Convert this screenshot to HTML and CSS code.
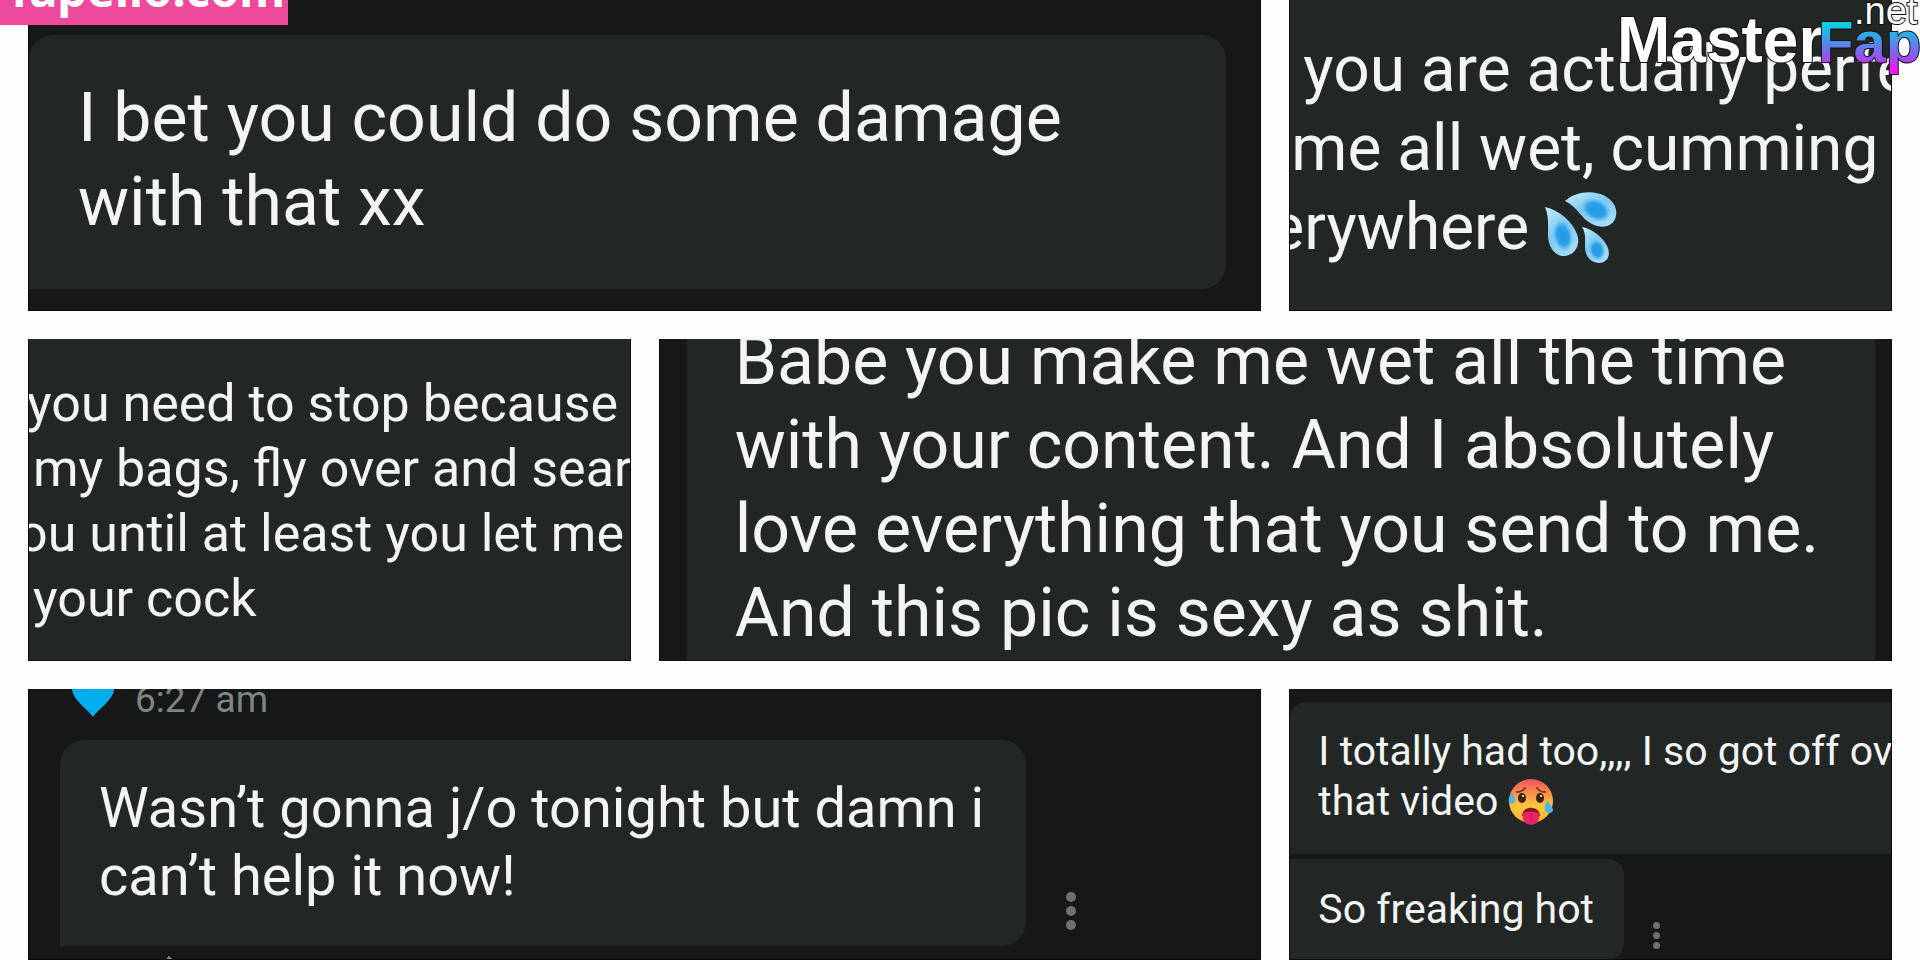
FILE: index.html
```html
<!DOCTYPE html>
<html lang="en">
<head>
<meta charset="utf-8">
<title>Messages</title>
<link rel="stylesheet" href="styles.css">
</head>
<body>
<div class="tag">fapello.com</div>
<svg class="logo" viewBox="0 0 304 80" role="img" aria-label="MasterFap.net">
  <defs>
    <linearGradient id="fap" gradientUnits="userSpaceOnUse" x1="0" y1="18" x2="0" y2="76">
      <stop offset="0" stop-color="#00e5e0"/>
      <stop offset="0.3" stop-color="#2fa8e8"/>
      <stop offset="0.7" stop-color="#a04cf0"/>
      <stop offset="0.9" stop-color="#ff10ff"/>
    </linearGradient>
  </defs>
  <text class="logo-main" x="1" y="62">Master</text>
  <text class="logo-fap" x="202" y="62">Fap</text>
  <text class="logo-net" x="238" y="24">.net</text>
</svg>
<main class="collage">
  <section class="panel wide first">
    <p class="bubble large open-left">I bet you could do some damage<br>with that xx</p>
  </section>

  <section class="panel plain second">
    <p class="lines medium">
      <span class="line in-a">you are actually perfe</span>
      <span class="line in-b">me all wet, cumming</span>
      <span class="line out-a">erywhere <svg class="drops" viewBox="0 0 72 72" role="img" aria-label="sweat drops">
        <defs>
          <linearGradient id="drop" x1="0" y1="0" x2="0.7" y2="1">
            <stop offset="0" stop-color="#c9effd"/><stop offset="0.5" stop-color="#7cc9f3"/><stop offset="1" stop-color="#a5dcf7"/>
          </linearGradient>
          <radialGradient id="core">
            <stop offset="0" stop-color="#1e97e4"/><stop offset="0.6" stop-color="#2fa2e8"/><stop offset="1" stop-color="#5ab8ee" stop-opacity="0"/>
          </radialGradient>
        </defs>
        <path fill="url(#drop)" d="M20 9C31-1 48-2 60 4c11 6 14 17 9 25-5 7-14 7-22 3C36 27 33 15 20 9Z"/>
        <ellipse fill="url(#core)" cx="51" cy="18" rx="16" ry="11" transform="rotate(25 51 18)"/>
        <path fill="url(#drop)" d="M0 15c14 3 27 14 32 27 4 11-2 21-12 22C10 65 3 55 3 43 3 33 4 25 0 15Z"/>
        <ellipse fill="url(#core)" cx="18" cy="44" rx="10" ry="16" transform="rotate(-12 18 44)"/>
        <path fill="url(#drop)" d="M37 35c11 2 22 11 26 21 3 9-2 15-9 15-8 0-14-7-14-16 0-7 1-14-3-20Z"/>
        <ellipse fill="url(#core)" cx="52" cy="58" rx="8" ry="11" transform="rotate(-12 52 58)"/>
      </svg></span>
    </p>
  </section>

  <section class="panel plain third">
    <p class="lines small">
      <span class="line out-b">you need to stop because</span>
      <span class="line in-c">my bags, fly over and sear</span>
      <span class="line out-c">ou until at least you let me</span>
      <span class="line in-c">your cock</span>
    </p>
  </section>

  <section class="panel wide fourth">
    <p class="bubble large">Babe you make me wet all the time<br>with your content. And I absolutely<br>love everything that you send to me.<br>And this pic is sexy as shit.</p>
  </section>

  <section class="panel wide fifth">
    <div class="meta">
      <svg class="heart" viewBox="0 0 42 40" aria-hidden="true"><path fill="#03aeef" d="M21 40C15 31 0 23 0 11 0-2 16-4 21 6c5-10 21-8 21 5 0 12-15 20-21 29Z"/></svg>
      <time>6:27 am</time>
    </div>
    <div class="row">
      <p class="bubble base">Wasn’t gonna j/o tonight but damn i<br>can’t help it now!</p>
      <button class="more" aria-label="More"><i></i><i></i><i></i></button>
    </div>
    <svg class="tick" viewBox="0 0 12 8" aria-hidden="true"><path d="M1 8 5 2l6 6" fill="none" stroke="#7d8585" stroke-width="3"/></svg>
  </section>

  <section class="panel sixth">
    <p class="bubble tiny bleed">I totally had too,,,, I so got off over<br>that video <svg class="face" viewBox="0 0 46 46" role="img" aria-label="hot face">
      <defs>
        <linearGradient id="skin" x1="0" y1="0" x2="0" y2="1">
          <stop offset="0" stop-color="#f0525a"/><stop offset="0.3" stop-color="#fa8a4c"/><stop offset="0.6" stop-color="#fdc63a"/><stop offset="1" stop-color="#fbb52c"/>
        </linearGradient>
      </defs>
      <circle cx="23" cy="22" r="22" fill="url(#skin)"/>
      <path d="M9 13q5 0 8-4M29 9q3 4 8 4" fill="none" stroke="#7a3a1c" stroke-width="2" stroke-linecap="round"/>
      <ellipse cx="14" cy="19" rx="4" ry="5" fill="#3b2114"/><ellipse cx="32" cy="19" rx="4" ry="5" fill="#3b2114"/>
      <circle cx="15" cy="17" r="1" fill="#fff"/><circle cx="33" cy="17" r="1" fill="#fff"/>
      <path d="M14 37c0-11 18-11 18 0Z" fill="#7b1c22"/>
      <path d="M15 34q8-3 16 0v5c0 9-16 9-16 0Z" fill="#e8246c"/>
      <path d="M23 34v7" stroke="#b8124f" stroke-width="1"/>
      <path d="M4 14c4 5 4 10 0 11-5-1-4-6 0-11ZM39 22c7 6 8 12 2 12-6-1-5-6-2-12Z" fill="#4fb6e6"/>
    </svg></p>
    <div class="row">
      <p class="bubble tiny short">So freaking hot</p>
      <button class="more mini" aria-label="More"><i></i><i></i><i></i></button>
    </div>
  </section>
</main>
</body>
</html>
```
FILE: styles.css
```css
* { box-sizing: border-box; }
body {
  margin: 0;
  height: 100vh;
  overflow: hidden;
  background: #fcfdfc;
  color: #f2f5f4;
  font-family: Roboto, "Liberation Sans", sans-serif;
  position: relative;
}
p { margin: 0; }
.collage {
  display: grid;
  grid-template-columns: repeat(3, minmax(0, 1fr));
  grid-template-rows: auto auto minmax(0, 1fr);
  gap: 28px;
  height: 100vh;
  padding: 0 28px;
}
.panel {
  min-width: 0;
  overflow: hidden;
  background: #161717;
  border: 1px solid #0b0d0c;
  border-top: 0;
  white-space: nowrap;
}
.wide { grid-column: span 2; }
.plain { background: #222625; }
.bubble { background: #222625; border-radius: 24px; }
.large { font-size: 68px; line-height: 84px; }
.medium { font-size: 64px; line-height: 79px; }
.small { font-size: 52px; line-height: 65px; }
.base { font-size: 56px; line-height: 68px; }
.tiny { font-size: 41px; line-height: 50px; }
.line { display: block; }
.in-a { padding-left: 13px; }
.in-b { padding-left: 1px; }
.in-c { padding-left: 4px; }
.out-a { margin-left: -20px; }
.out-b { margin-left: -2px; }
.out-c { margin-left: -11px; }

.first { padding: 35px 34px 21px 0; }
.open-left { padding: 41px 49px 45px; border-bottom-left-radius: 0; }
.second { padding-top: 30px; }
.third { padding: 32px 0 29px; }
.fourth { padding: 0 16px 0 27px; height: 322px; }
.fourth .bubble { margin-top: -20px; padding: 0 48px 20px; border-radius: 0; }
.fifth { padding-left: 31px; }
.meta {
  display: flex;
  align-items: flex-end;
  gap: 21px;
  height: 28px;
  padding-left: 12px;
  color: #7d8585;
  font-size: 37px;
  line-height: 34px;
}
.heart { width: 42px; height: 40px; flex: none; }
.row { display: flex; align-items: flex-end; }
.fifth .row { margin-top: 23px; }
.base { padding: 34px 42px 36px 39px; border-bottom-left-radius: 0; }
.more {
  display: flex;
  flex-direction: column;
  gap: 4px;
  margin: 0 0 16px 40px;
  padding: 0;
  border: 0;
  background: none;
}
.more i { width: 10px; height: 10px; border-radius: 50%; background: #6b7170; }
.mini { gap: 3px; margin: 0 0 11px 29px; }
.mini i { width: 7px; height: 7px; }
.tick { display: block; width: 12px; height: 8px; margin: 10px 0 0 104px; }
.sixth { padding-top: 13px; }
.bleed { padding: 24px 28px 28px; border-radius: 16px 0 0 0; }
.sixth .row { margin-top: 5px; }
.short { padding: 25px 30px 26px 28px; border-radius: 0 16px 16px 0; }
.drops { width: 72px; height: 72px; vertical-align: -15px; margin-block: -20px 0; }
.face { width: 46px; height: 46px; vertical-align: -10px; margin-block: -10px 0; }

.tag {
  position: absolute;
  top: 0;
  left: 0;
  z-index: 1;
  width: 288px;
  height: 25px;
  padding-left: 11px;
  overflow: hidden;
  display: flex;
  align-items: flex-end;
  background: #ee4a9b;
  color: #fff;
  font: bold 47px/72px "Noto Sans", sans-serif;
}
.logo {
  position: absolute;
  top: 0;
  right: 0;
  z-index: 1;
  width: 304px;
  height: 80px;
  font-family: "Liberation Sans", Arial, sans-serif;
}
.logo text { stroke: #111; stroke-width: 2px; paint-order: stroke; fill: #fff; }
.logo-main { font-size: 64px; font-weight: bold; }
.logo .logo-fap { font-size: 58px; font-weight: bold; fill: url(#fap); }
.logo-net { font-size: 38px; }
```
